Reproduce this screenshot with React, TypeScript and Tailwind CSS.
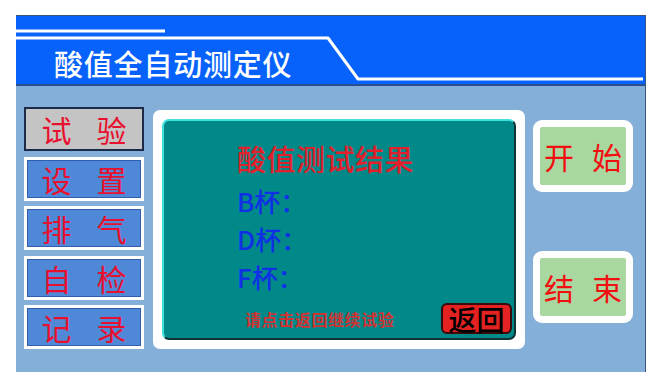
const CJK = { fontFamily: '"Noto Sans CJK SC", "Noto Sans", sans-serif' };

const MENU = [
  { a: '试', b: '验', active: true },
  { a: '设', b: '置' },
  { a: '排', b: '气' },
  { a: '自', b: '检' },
  { a: '记', b: '录' },
];

const CUPS = ['B', 'D', 'F'];

function MenuButton({ a, b, active }: { a: string; b: string; active?: boolean }) {
  if (active) {
    return (
      <div className="h-[44px] border-2 border-[#1c2b4a] bg-[#c4c4c4] flex items-center justify-center gap-[25px] text-[30px] leading-none text-[#e8102e]">
        <span>{a}</span>
        <span>{b}</span>
      </div>
    );
  }
  return (
    <div className="h-[44px] border-[3px] border-white">
      <div className="h-full border border-[#2f5fae] bg-[#5088d8] flex items-center justify-center gap-[25px] text-[30px] leading-none text-[#e8102e]">
        <span>{a}</span>
        <span>{b}</span>
      </div>
    </div>
  );
}

function ActionButton({ a, b }: { a: string; b: string }) {
  return (
    <div className="h-[72px] rounded-[9px] bg-white p-[7px]">
      <div className="h-full rounded-[2px] bg-[#a9d7a0] flex items-center justify-center gap-[18px] text-[30px] leading-none text-[#f01010]">
        <span>{a}</span>
        <span>{b}</span>
      </div>
    </div>
  );
}

export default function App() {
  return (
    <div className="w-[652px] h-[377px] bg-white pt-[15px] pl-[16px]" style={CJK}>
      <div className="w-[630px] h-[357px] border-t border-r border-[#3a5580] bg-[#84afd9] flex flex-col">
        {/* title bar */}
        <div className="relative h-[70px] shrink-0 bg-[#0762fb] border-b-2 border-[#2b4f8f]">
          <svg className="absolute inset-0" width="629" height="70" viewBox="0 0 629 70" fill="none">
            <path d="M0 15 H149" stroke="#fff" strokeWidth="3" />
            <path d="M0 22 H312 L342 63 H627" stroke="#fff" strokeWidth="3" strokeLinejoin="round" />
          </svg>
          <div className="relative pl-[38px] pt-[33px] text-[29px] leading-none text-white font-medium tracking-[0.8px]">
            酸值全自动测定仪
          </div>
        </div>

        {/* body */}
        <div className="flex-1 flex pl-[8px]">
          <div className="w-[120px] mt-[21px] flex flex-col gap-[5.5px]">
            {MENU.map((m) => (
              <MenuButton key={m.a} {...m} />
            ))}
          </div>

          <div className="ml-[9px] mt-[24px] w-[372px] h-[239px] rounded-[7px] bg-white p-[9px]">
            <div className="h-full rounded-[7px] bg-[#01898a] border-2 border-t-[#3fe0e0] border-l-[#3fe0e0] border-r-[#0c3434] border-b-[#0c3434] flex flex-col">
              <div className="pl-[73px] pt-[23px] text-[29px] leading-none font-medium text-[#e0202a] tracking-[0.5px]">
                酸值测试结果
              </div>
              <div className="pl-[73px] pt-[15px] flex flex-col gap-[12px]">
                {CUPS.map((c) => (
                  <div key={c} className="text-[26px] leading-none font-medium text-[#1030e6]">
                    {c}杯：
                  </div>
                ))}
              </div>
              <div className="mt-auto flex items-center pl-[81px] pr-[2px] pb-[4px]">
                <span className="text-[16px] leading-none font-bold text-[#d23232] tracking-[0.6px]">请点击返回继续试验</span>
                <div className="ml-auto w-[71px] h-[31px] rounded-[6px] bg-[#e42222] border-2 border-[#3a0a0a] flex items-center justify-center text-[28px] leading-none font-medium text-black">
                  返回
                </div>
              </div>
            </div>
          </div>

          <div className="ml-[8px] mt-[34px] w-[100px] flex flex-col gap-[59px]">
            <ActionButton a="开" b="始" />
            <ActionButton a="结" b="束" />
          </div>
        </div>
      </div>
    </div>
  );
}
